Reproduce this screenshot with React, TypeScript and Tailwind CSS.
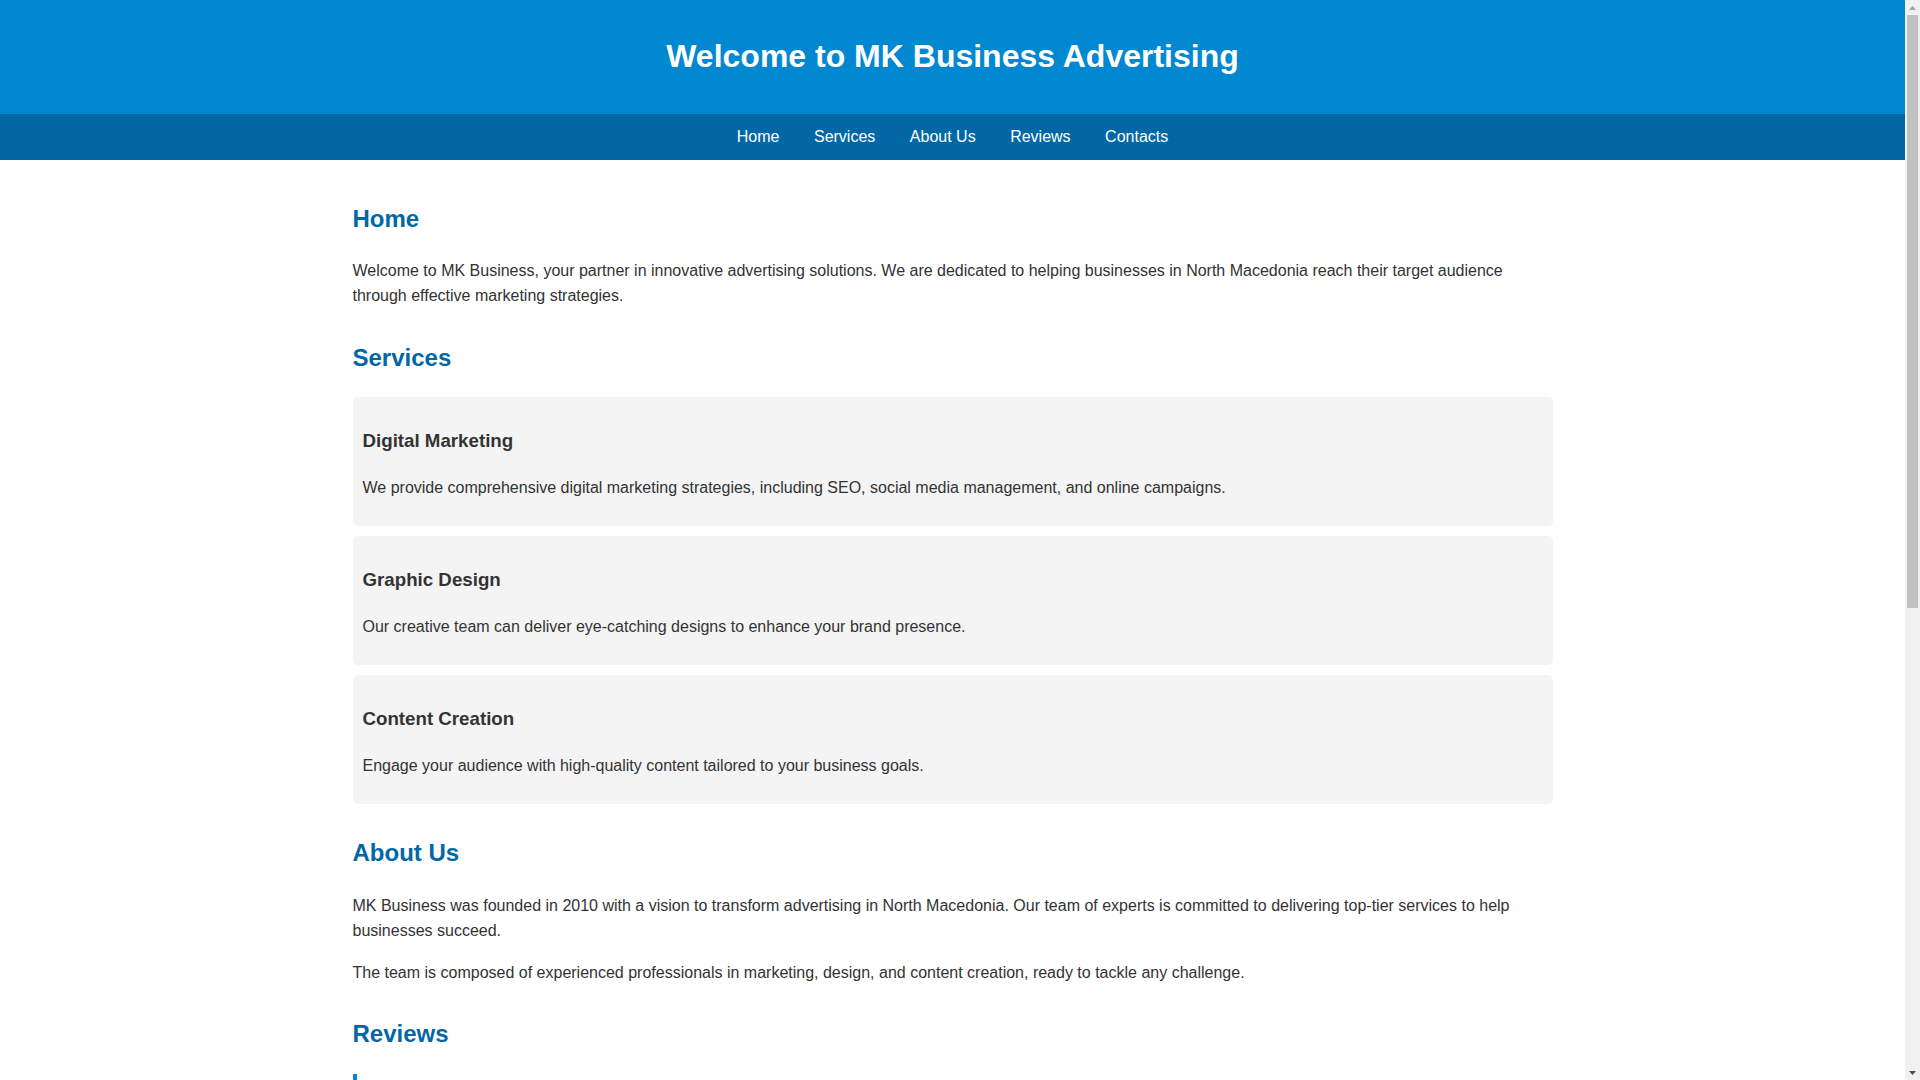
import React from "react";

const services = [
  {
    title: "Digital Marketing",
    text: "We provide comprehensive digital marketing strategies, including SEO, social media management, and online campaigns.",
  },
  {
    title: "Graphic Design",
    text: "Our creative team can deliver eye-catching designs to enhance your brand presence.",
  },
  {
    title: "Content Creation",
    text: "Engage your audience with high-quality content tailored to your business goals.",
  },
];

const reviews = [
  {
    text: "\u201cMK Business helped us double our online reach in just a few months. Highly recommended!\u201d",
    author: "\u2014 Ana P., Skopje",
  },
  {
    text: "\u201cProfessional, creative and always on time. Their designs gave our brand a fresh new look.\u201d",
    author: "\u2014 Marko T., Bitola",
  },
];

function Page() {
  return (
    <div className="font-['Liberation_Sans',Arial,sans-serif] text-[16px] leading-[1.6] text-[#333] bg-white">
      <header className="bg-[#0288d1] text-white text-center py-[10px]">
        <h1 className="text-[32px] font-bold leading-[1.6] my-[21.44px]">
          Welcome to MK Business Advertising
        </h1>
      </header>

      <nav className="bg-[#0267a5] py-[10px]">
        <ul className="flex justify-center gap-[34.5px]">
          {["Home", "Services", "About Us", "Reviews", "Contacts"].map((l) => (
            <li key={l}>
              <a href={"#" + l.toLowerCase().replace(" ", "")} className="text-white">
                {l}
              </a>
            </li>
          ))}
        </ul>
      </nav>

      <main className="max-w-[1200px] mx-auto py-5">
        <section id="home" className="mb-[30px]">
          <h2 className="text-[24px] font-bold leading-[1.6] my-[19.92px] text-[#0267a5]">Home</h2>
          <p className="my-4">
            Welcome to MK Business, your partner in innovative advertising solutions. We are dedicated to helping
            businesses in North Macedonia reach their target audience through effective marketing strategies.
          </p>
        </section>

        <section id="services" className="mb-[30px]">
          <h2 className="text-[24px] font-bold leading-[1.6] my-[19.92px] text-[#0267a5]">Services</h2>
          {services.map((s) => (
            <div key={s.title} className="bg-[#f4f4f4] rounded-[5px] p-[10px] mb-[10px]">
              <h3 className="text-[18.72px] font-bold leading-[1.6] my-[18.72px]">{s.title}</h3>
              <p className="my-4">{s.text}</p>
            </div>
          ))}
        </section>

        <section id="aboutus" className="mb-[30px]">
          <h2 className="text-[24px] font-bold leading-[1.6] my-[19.92px] text-[#0267a5]">About Us</h2>
          <p className="my-4">
            MK Business was founded in 2010 with a vision to transform advertising in North Macedonia. Our team of
            experts is committed to delivering top-tier services to help businesses succeed.
          </p>
          <p className="my-4">
            The team is composed of experienced professionals in marketing, design, and content creation, ready to
            tackle any challenge.
          </p>
        </section>

        <section id="reviews" className="mb-[30px]">
          <h2 className="text-[24px] font-bold leading-[1.6] my-[19.92px] text-[#0267a5]">Reviews</h2>
          {reviews.map((r) => (
            <blockquote key={r.author} className="border-l-4 border-[#0288d1] px-5 py-[10px] mb-5">
              <p className="italic">{r.text}</p>
              <p className="mt-4 font-bold">{r.author}</p>
            </blockquote>
          ))}
        </section>

        <section id="contacts">
          <h2 className="text-[24px] font-bold leading-[1.6] my-[19.92px] text-[#0267a5]">Contacts</h2>
          <p className="my-4">Email: info@mkbusiness.mk</p>
          <p className="my-4">Phone: +389 2 123 4567</p>
          <p className="my-4">Address: Skopje, North Macedonia</p>
          <form className="mt-4">
            <input
              type="text"
              placeholder="Your Name"
              className="block w-full p-[10px] mb-[10px] border border-[#ccc] rounded-[5px]"
            />
            <input
              type="email"
              placeholder="Your Email"
              className="block w-full p-[10px] mb-[10px] border border-[#ccc] rounded-[5px]"
            />
            <textarea
              rows={5}
              placeholder="Your Message"
              className="block w-full p-[10px] mb-[10px] border border-[#ccc] rounded-[5px]"
            />
            <button type="button" className="bg-[#0288d1] text-white px-5 py-[10px] rounded-[5px]">
              Send Message
            </button>
          </form>
        </section>
      </main>

      <footer className="bg-[#0267a5] text-white text-center py-[10px]">
        <p>&copy; 2024 MK Business Advertising. All rights reserved.</p>
      </footer>
    </div>
  );
}

function ScrollBar() {
  return (
    <div className="w-[15px] shrink-0 h-full bg-[#f1f1f1] flex flex-col">
      <div className="h-[15px] flex items-center justify-center">
        <svg width="7" height="4" viewBox="0 0 7 4">
          <path d="M0 4 L3.5 0 L7 4 Z" fill="#a3a3a3" />
        </svg>
      </div>
      <div className="h-[593px] mx-[2px] bg-[#c1c1c1]" />
      <div className="flex-1" />
      <div className="h-[15px] flex items-center justify-center">
        <svg width="7" height="4" viewBox="0 0 7 4">
          <path d="M0 0 L7 0 L3.5 4 Z" fill="#505050" />
        </svg>
      </div>
    </div>
  );
}

export default function App() {
  return (
    <div className="flex h-screen w-full overflow-hidden">
      <div className="flex-1 min-w-0 h-full overflow-y-auto [scrollbar-width:none]">
        <Page />
      </div>
      <ScrollBar />
    </div>
  );
}
